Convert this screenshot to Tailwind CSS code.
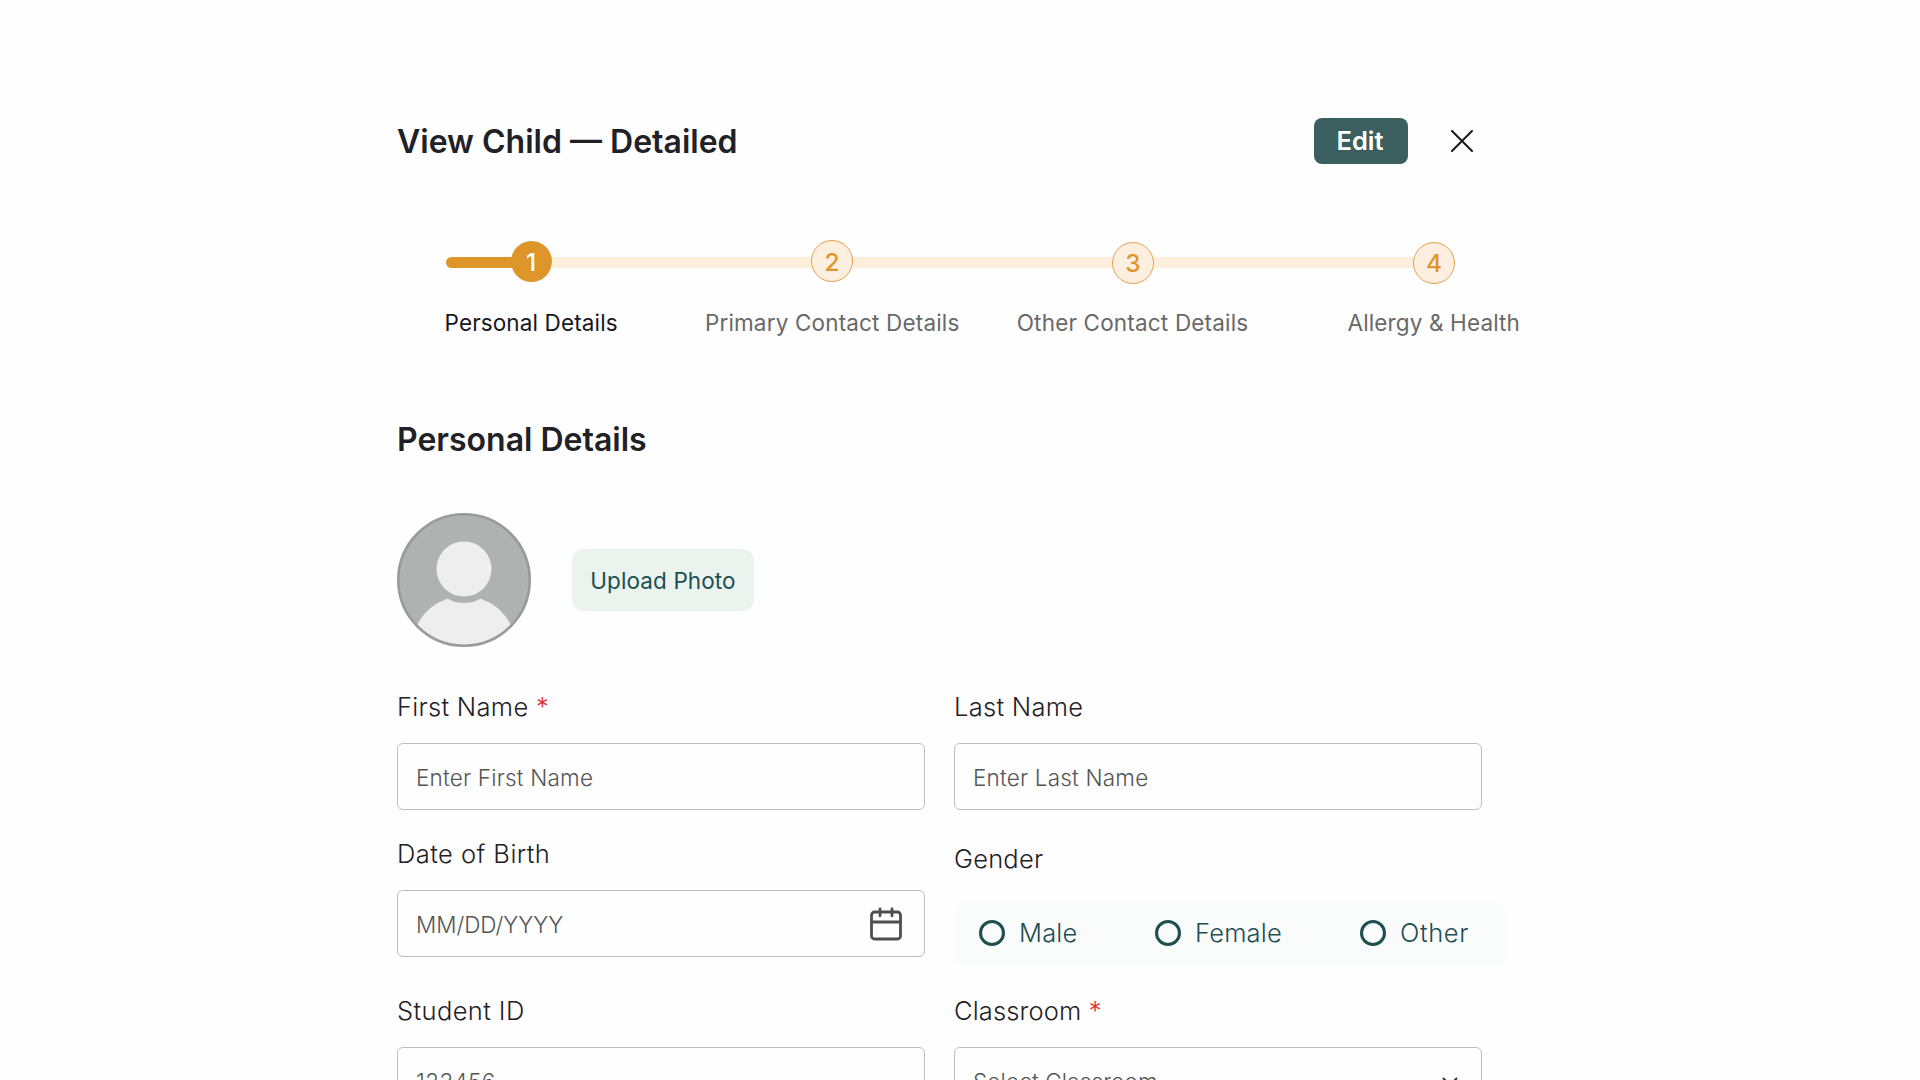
<!DOCTYPE html>
<html lang="en">
<head>
  <meta charset="UTF-8" />
  <title>View Child</title>
  <script src="https://cdn.jsdelivr.net/npm/@tailwindcss/browser@4"></script>
</head>
<body class="bg-[#fefefe] font-['Inter',sans-serif] text-[#1f2126] h-screen overflow-hidden">
  <main class="ml-[397px] w-[1123px] pt-[118px]">

    <!-- Header -->
    <header class="flex items-center h-[46px]">
      <h1 class="w-[917px] pt-px text-[32px] leading-[46px] font-semibold">View Child — Detailed</h1>
      <button class="w-[94px] h-[46px] pr-[2px] rounded-lg bg-[#3b5f5e] text-white text-[25.5px] leading-[46px] font-semibold">Edit</button>
      <button class="ml-[43px]" aria-label="Close">
        <svg class="w-[22px] h-[22px] block" viewBox="0 0 22 22" fill="none" stroke="#16181d" stroke-width="2" stroke-linecap="round">
          <path d="M1 1l20 20M21 1L1 21" />
        </svg>
      </button>
    </header>

    <!-- Stepper -->
    <div class="mt-[76px] ml-[49px] flex items-start h-[44px] text-[24.5px] font-medium">
      <div class="mt-[17px] w-[67px] h-[11px] rounded-l-full bg-[#de962b]"></div>
      <div class="-ml-[2px] mt-[0.5px] pt-[2px] pr-px size-[41px] shrink-0 rounded-full bg-[#de962b] text-white flex items-center justify-center">1</div>
      <div class="mt-[17px] w-[259px] h-[11px] bg-[#fdeedb]"></div>
      <div class="pt-[2px] size-[42px] shrink-0 rounded-full border border-[#e3a14d] bg-[#fdefdf] text-[#de962b] flex items-center justify-center">2</div>
      <div class="mt-[17px] w-[259px] h-[11px] bg-[#fdeedb]"></div>
      <div class="mt-[2px] pt-px size-[42px] shrink-0 rounded-full border border-[#e3a14d] bg-[#fdefdf] text-[#de962b] flex items-center justify-center">3</div>
      <div class="mt-[17px] w-[259px] h-[11px] bg-[#fdeedb]"></div>
      <div class="mt-[2px] pt-px size-[42px] shrink-0 rounded-full border border-[#e3a14d] bg-[#fdefdf] text-[#de962b] flex items-center justify-center">4</div>
    </div>
    <div class="mt-[23px] ml-[47.5px] flex text-[22.5px] leading-[32px] tracking-[0.13px] text-[#696969] whitespace-nowrap">
      <span class="w-[260.5px] text-[#16181d]">Personal Details</span>
      <span class="w-[312px] tracking-[0.16px]">Primary Contact Details</span>
      <span class="w-[331px] tracking-[0.18px]">Other Contact Details</span>
      <span>Allergy &amp; Health</span>
    </div>

    <h2 class="mt-[80px] text-[32px] leading-[42px] font-semibold">Personal Details</h2>

    <!-- Photo -->
    <div class="mt-[52px] flex items-center">
      <svg class="w-[134px] h-[134px] block" viewBox="0 0 134 134">
        <defs>
          <clipPath id="face"><circle cx="67" cy="67" r="65" /></clipPath>
        </defs>
        <circle cx="67" cy="67" r="65.7" fill="#b0b2b2" />
        <g clip-path="url(#face)">
          <ellipse cx="67" cy="134" rx="52" ry="51" fill="#eeeeee" />
          <circle cx="67" cy="56" r="34" fill="#b0b2b2" />
        </g>
        <circle cx="67" cy="56" r="27.5" fill="#eeeeee" />
        <circle cx="67" cy="67" r="65.7" fill="none" stroke="#999b9b" stroke-width="2.6" />
      </svg>
      <button class="ml-[41px] w-[182px] h-[62px] pt-[2px] rounded-xl bg-[#eaf3ee] text-[#1d4f50] text-[22.5px] tracking-[0.1px]">Upload Photo</button>
    </div>

    <!-- Form -->
    <div class="mt-[40px] grid grid-cols-[528px_528px] gap-x-[29px] text-[25.5px] leading-[40px] font-light tracking-[0.3px]">
      <div class="h-[147px]">
        <label class="block">First Name <span class="text-[#e02b2b]">*</span></label>
        <div class="mt-[16px] h-[67px] rounded-md border border-[#bdbdbd] px-[18px] pt-[2px] flex items-center text-[22.5px] tracking-[0.2px] text-[#555]">Enter First Name</div>
      </div>
      <div class="h-[147px]">
        <label class="block">Last Name</label>
        <div class="mt-[16px] h-[67px] rounded-md border border-[#bdbdbd] px-[18px] pt-[2px] flex items-center text-[22.5px] tracking-[0.2px] text-[#555]">Enter Last Name</div>
      </div>

      <div class="h-[157px]">
        <label class="block tracking-[0.45px]">Date of Birth</label>
        <div class="mt-[16px] h-[67px] rounded-md border border-[#bdbdbd] pl-[18px] pr-[22px] pt-[2px] flex items-center justify-between text-[22.5px] text-[#555] tracking-[-0.05px]">
          MM/DD/YYYY
          <svg class="w-[32px] h-[34px] -mt-[2px]" viewBox="0 0 32 34" fill="none" stroke="#4f4f4f" stroke-width="2.8" stroke-linecap="round" stroke-linejoin="round">
            <rect x="1.5" y="5" width="29" height="27" rx="3" />
            <path d="M1.5 15h29M10 1.8v7M22 1.8v7" />
          </svg>
        </div>
      </div>
      <div class="h-[157px]">
        <label class="block mt-[5px] tracking-[0.2px]">Gender</label>
        <div class="mt-[24px] ml-[2px] w-[550px] h-[64px] rounded-lg bg-[#fafbfb] pl-[23px] pb-[5px] flex items-center text-[#1d4f50] tracking-[0.2px]">
          <span class="w-[176px] flex items-center gap-[14px]"><i class="size-[26px] rounded-full border-3 border-[#1d4f50]"></i>Male</span>
          <span class="w-[205px] flex items-center gap-[14px]"><i class="size-[26px] rounded-full border-3 border-[#1d4f50]"></i>Female</span>
          <span class="flex items-center gap-[14px] tracking-[0.6px]"><i class="size-[26px] rounded-full border-3 border-[#1d4f50]"></i>Other</span>
        </div>
      </div>

      <div>
        <label class="block tracking-[0.4px]">Student ID</label>
        <div class="mt-[16px] h-[67px] rounded-md border border-[#bdbdbd] px-[18px] pt-[2px] flex items-center text-[22.5px] tracking-[0.4px] text-[#555]">123456</div>
      </div>
      <div>
        <label class="block tracking-[0.15px]">Classroom <span class="text-[#e02b2b]">*</span></label>
        <div class="mt-[16px] h-[67px] rounded-md border border-[#bdbdbd] pl-[18px] pr-[23px] pt-[2px] flex items-center justify-between text-[22.5px] tracking-[0.15px] text-[#555]">
          Select Classroom
          <svg class="w-[16px] h-[10px]" viewBox="0 0 16 10" fill="none" stroke="#333" stroke-width="2" stroke-linecap="round" stroke-linejoin="round">
            <path d="M1.500 1.500L8 8l6.500-6.500" />
          </svg>
        </div>
      </div>
    </div>
  </main>
</body>
</html>
